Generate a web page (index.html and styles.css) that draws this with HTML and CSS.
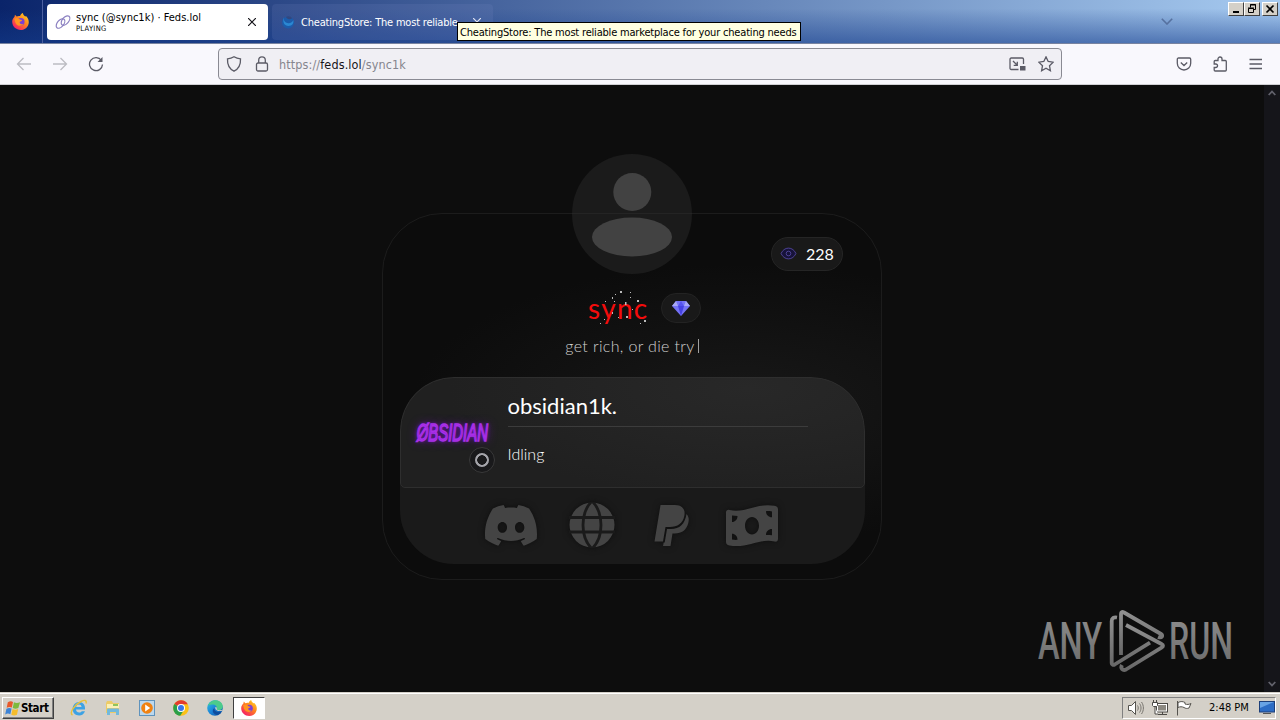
FILE: index.html
```html
<!DOCTYPE html>
<html lang="en">
<head>
    <meta charset="UTF-8">
    <meta name="viewport" content="width=device-width, initial-scale=1.0">
    <title>sync (@sync1k) · Feds.lol</title>
    <link rel="stylesheet" href="styles.css">
</head>
<body>
    <!-- shared icons -->
    <svg width="0" height="0" class="defs">
        <defs>
            <linearGradient id="foxBody" x1="1" y1="0" x2="0.2" y2="1">
                <stop offset="0" stop-color="#ffe226"/>
                <stop offset="0.45" stop-color="#ff8a1c"/>
                <stop offset="1" stop-color="#f5156c"/>
            </linearGradient>
            <linearGradient id="edgeBody" x1="0" y1="0" x2="1" y2="1">
                <stop offset="0" stop-color="#2fc3df"/>
                <stop offset="0.5" stop-color="#1b83d8"/>
                <stop offset="1" stop-color="#0c4fa0"/>
            </linearGradient>
            <linearGradient id="mark" x1="0" y1="0" x2="0" y2="1">
                <stop offset="0" stop-color="#8f8f8f"/>
                <stop offset="1" stop-color="#686868"/>
            </linearGradient>
            <symbol id="firefox" viewBox="0 0 16 16">
                <path d="M2.4 3.6l.4-2 1.6 1.7C5.400 2.700 6.500 2.600 7.600 2.900 8 1.600 8.900.6 10.200 0c.2 1.600 1 2.300 2.300 3.200l.7-.3C15 4.500 15.900 6.700 15.800 8.900 15.600 13 12.200 16 8.200 16 3.900 16 .3 12.700.2 8.500.1 6.600.9 5 2.400 3.600z" fill="url(#foxBody)"/>
                <circle cx="8.300" cy="8.300" r="3.500" fill="#7a3fd6"/>
                <path d="M2 5.500c2.200-1.500 4.300-1 5.400.7l2.100.5c-.3 1-1.300 1.300-2.200 1.600-.4 1.800 1.400 2.700 3.500 1.900-1.300 2.500-5.800 2.500-7.300-.6C2.600 8.500 3 7 2 5.500z" fill="#ff9420"/>
            </symbol>
        </defs>
    </svg>

    <div class="browser">
        <div class="titlebar">
            <div class="pinned">
                <svg width="17" height="17"><use href="#firefox"/></svg>
            </div>
            <div class="tab active">
                <svg class="favicon" width="16" height="16" viewBox="0 0 16 16" fill="none" stroke="#8a7fc0" stroke-width="1.200">
                    <ellipse cx="5.500" cy="9.500" rx="3.200" ry="5.500" transform="rotate(40 5.500 9.500)"/>
                    <ellipse cx="10.500" cy="6.500" rx="3.200" ry="5.500" transform="rotate(40 10.500 6.500)"/>
                </svg>
                <div class="tab-text">
                    <span class="tab-title">sync (@sync1k) · Feds.lol</span>
                    <span class="tab-status">PLAYING</span>
                </div>
                <svg class="tab-close" width="8" height="8" viewBox="0 0 8 8" stroke="#15141a" stroke-width="1.200"><path d="M0 0l8 8M8 0l-8 8"/></svg>
            </div>
            <div class="tab">
                <svg class="favicon" width="16" height="16" viewBox="0 0 16 16">
                    <circle cx="8" cy="8.500" r="6" fill="#1c5cab"/>
                    <path d="M4 3c-1 4 2 6.500 5 6.200 2.500-.2 4-1.700 4.200-3.200 1 3-1.200 6-4.700 6C4.500 12 2 8 4 3z" fill="#2b88d2"/>
                    <path d="M6 3c1 2 3 3 6 1.500C11 2 8 1.500 6 3z" fill="#33477e"/>
                </svg>
                <span class="tab-title long">CheatingStore: The most reliable</span>
                <svg class="tab-close" width="8" height="8" viewBox="0 0 8 8" stroke="#dfe4f2" stroke-width="1.200"><path d="M0 0l8 8M8 0l-8 8"/></svg>
            </div>
            <svg class="all-tabs" width="12" height="7" viewBox="0 0 12 7" fill="none" stroke="#56719f" stroke-width="1.600"><path d="M.8.8L6 6l5.200-5.200"/></svg>
            <div class="controls">
                <button><svg width="12" height="10" viewBox="0 0 12 10"><path d="M3 8h6" stroke="#000" stroke-width="2"/></svg></button>
                <button><svg width="12" height="10" viewBox="0 0 12 10" fill="none" stroke="#000"><path d="M4.500 3.500V.5h5v5H8M4 1h6M2.500 4.500h5v4h-5zM2 4h6"/></svg></button>
                <button class="close"><svg width="12" height="10" viewBox="0 0 12 10" stroke="#000" stroke-width="1.700"><path d="M2.500 1.500l7 7M9.500 1.500l-7 7"/></svg></button>
            </div>
        </div>

        <div class="toolbar">
            <svg class="nav back" width="16" height="16" viewBox="0 0 16 16"><path d="M15 8H1.500M7.500 2L1.500 8l6 6"/></svg>
            <svg class="nav forward" width="16" height="16" viewBox="0 0 16 16"><path d="M1 8h13.500M8.500 2l6 6-6 6"/></svg>
            <svg class="nav reload" width="16" height="16" viewBox="0 0 16 16"><path d="M13.400 4.500A6.500 6.500 0 1 0 14.500 8.500"/><path d="M14.500 1v5h-5z" fill="#5b5b66" stroke="none"/></svg>
            <div class="urlbar">
                <svg width="16" height="16" viewBox="0 0 16 16"><path d="M8 .8c2 1.300 4.300 1.900 6.500 2 .3 5.700-1.500 10-6.500 12.400C3 12.800 1.200 8.500 1.500 2.800 3.700 2.700 6 2.100 8 .8z"/></svg>
                <svg width="16" height="16" viewBox="0 0 16 16"><rect x="2.500" y="7" width="11" height="8" rx="1.500"/><path d="M4.700 7V4.200a3.300 3.300 0 0 1 6.600 0V7"/></svg>
                <span class="url">https://<b>feds.lol</b>/sync1k</span>
                <svg width="17" height="16" viewBox="0 0 17 16"><path d="M9.500 13.500H2.200C1.500 13.500 1 13 1 12.300V3.200C1 2.500 1.500 2 2.200 2h11.100c.7 0 1.200.5 1.200 1.200V8M4 5l4 4M8.300 5.700v3.600H4.700"/><rect x="11" y="10" width="5.500" height="4.500" fill="#5b5b66" stroke="none"/></svg>
                <svg width="16" height="16" viewBox="0 0 16 16"><path d="M8 .9l2.200 4.600 5 .7-3.700 3.500.9 5L8 12.300l-4.400 2.400.9-5L.8 6.200l5-.7z"/></svg>
            </div>
            <svg width="16" height="16" viewBox="0 0 16 16"><path d="M2.500 2h11c.7 0 1.200.5 1.200 1.200v4.100a6.700 6.700 0 0 1-13.400 0V3.200C1.300 2.500 1.800 2 2.500 2zM4.800 6.500L8 9.500l3.200-3"/></svg>
            <svg width="16" height="16" viewBox="0 0 16 16"><path d="M6 4.500V3a2 2 0 0 1 4 0v1.500h3.300c.6 0 1 .4 1 1V14c0 .6-.4 1-1 1H3.200c-.6 0-1-.4-1-1v-2.500h1.600a1.700 1.700 0 0 0 0-3.500H2.200V5.500c0-.6.400-1 1-1z"/></svg>
            <svg width="16" height="16" viewBox="0 0 16 16"><path d="M1.500 3.500h12.500M1.500 8h12.500M1.500 12.500h12.500"/></svg>
        </div>

        <div class="page">
            <main>
                <div class="card">
                    <svg class="avatar" width="120" height="120" viewBox="0 0 120 120">
                        <circle cx="60" cy="60" r="60" fill="#1b1b1b"/>
                        <path d="M0 59.500h120" stroke="#242424"/>
                        <circle cx="60.300" cy="38" r="19" fill="#424242"/>
                        <ellipse cx="60" cy="83" rx="40" ry="19.500" fill="#424242"/>
                    </svg>
                    <div class="views">
                        <svg width="17" height="13" viewBox="0 0 18 14" fill="#17133a" stroke="#51459b"><path d="M1 7c1.500-3.500 4.500-5.800 8-5.800s6.500 2.300 8 5.800c-1.500 3.500-4.500 5.800-8 5.800S2.500 10.500 1 7z"/><circle cx="9" cy="7" r="2.500"/></svg>
                        <span>228</span>
                    </div>
                    <div class="name-row">
                        <h1 class="name">sync</h1>
                        <svg class="sparkles" width="64" height="38" viewBox="0 0 64 38" fill="#bbb">
                            <path d="M37 2h2v2h-2zM32 5h1v1h-1zM29 8h1v2h-1zM47 3h1v1h-1zM42 13h1.500v3H42zM54 11h2v2h-2zM47 8h1v1h-1zM29 23h1v2h-1zM43 27h2v2h-2zM61 31h2v2h-2zM57 34h1v1h-1zM35 28h1v1h-1zM21 30h1v1h-1zM17 34h1v1h-1zM31 12h1v1h-1zM49 20h1v1h-1zM22 12h1v1h-1z"/>
                        </svg>
                        <div class="badge">
                            <svg width="18" height="15" viewBox="0 0 18 15">
                                <path d="M4 0h10l4 5-9 10L0 5z" fill="#7472f5"/>
                                <path d="M4 0l2 5H0zM14 0l-2 5h6z" fill="#a7a8f4"/>
                                <path d="M9 0l3 5H6z" fill="#5552ee"/>
                                <path d="M6 5h6l-3 10z" fill="#4541e2"/>
                            </svg>
                        </div>
                    </div>
                    <p class="bio">get rich, or die try<i class="cursor"></i></p>

                    <div class="panel">
                        <div class="presence">
                            <div class="discord-avatar">
                                <span class="neon">ØBSIDIAN</span>
                                <span class="status"></span>
                            </div>
                            <div class="activity">
                                <h2>obsidian1k.</h2>
                                <p>Idling</p>
                            </div>
                        </div>
                        <div class="socials">
                            <svg width="52" height="41" viewBox="0 2.800 24 18.500" preserveAspectRatio="none"><path d="M20.317 4.370a19.790 19.790 0 0 0-4.885-1.515.074.074 0 0 0-.079.037c-.211.375-.445.865-.608 1.250-1.845-.276-3.680-.276-5.487 0-.164-.393-.406-.874-.618-1.250a.077.077 0 0 0-.079-.037 19.736 19.736 0 0 0-4.885 1.515.070.070 0 0 0-.032.028C.533 9.046-.319 13.580.099 18.058a.082.082 0 0 0 .031.056c2.053 1.508 4.041 2.423 5.993 3.029a.078.078 0 0 0 .084-.028c.462-.630.873-1.295 1.226-1.994a.076.076 0 0 0-.042-.106c-.653-.248-1.274-.550-1.872-.892a.077.077 0 0 1-.008-.128c.126-.094.252-.192.372-.291a.074.074 0 0 1 .078-.011c3.928 1.793 8.180 1.793 12.061 0a.074.074 0 0 1 .079.010c.120.099.246.198.373.292a.077.077 0 0 1-.007.128 12.299 12.299 0 0 1-1.873.891.077.077 0 0 0-.041.107c.360.698.772 1.363 1.225 1.993a.076.076 0 0 0 .084.029c1.961-.607 3.950-1.522 6.002-3.029a.077.077 0 0 0 .031-.055c.500-5.177-.838-9.674-3.549-13.660a.061.061 0 0 0-.031-.029zM8.020 15.331c-1.183 0-2.157-1.086-2.157-2.419s.956-2.419 2.157-2.419c1.211 0 2.176 1.095 2.157 2.419 0 1.333-.956 2.419-2.157 2.419zm7.975 0c-1.183 0-2.157-1.086-2.157-2.419s.955-2.419 2.157-2.419c1.211 0 2.176 1.095 2.157 2.419 0 1.333-.946 2.419-2.157 2.419z"/></svg>
                            <svg class="globe" width="46" height="46" viewBox="0 0 46 46"><circle cx="23" cy="23" r="22.500"/><path d="M0 15.500h46M0 30h46M23-1C11 11 11 35 23 47M23-1c12 12 12 36 0 48" fill="none" stroke="#1a1a1a" stroke-width="2.800"/></svg>
                            <svg class="paypal" width="36" height="41" viewBox="0 0 36 41"><path d="M6.500 0H21c7 0 11 4.500 9.300 11-1.600 7.500-6.800 11-14.300 11H11.500L9 36.500H.5z"/><path d="M32.500 9c2.500 2.500 2.700 5.500 1.800 9-1.800 7-6.500 10.500-13.500 10.500h-2.300L16.500 41H9l.7-3.500h1L13 24h4c8.500 0 14-5 15.500-15z"/></svg>
                            <svg width="52" height="41" viewBox="0 0 52 41" fill-rule="evenodd"><path d="M0 7.500C0 5.500 1.500 4.500 3.500 5 19 8.500 31-2.500 48.500.800 51 1.300 52 2.500 52 4.500V34c0 2-1.500 3-3.500 2.500C33 33 21 44 3.500 40.500 1 40 0 39 0 37zM26 12c-3.800 0-7 3.800-7 8.700s3.200 8.700 7 8.700 7-3.800 7-8.700S29.800 12 26 12zM6 10.500V17c3 0 5.500-2.500 5.500-6zM6 34.500c2 .4 4 .5 5.500.3 0-3.500-2.500-6-5.500-6zM46 6.500c-2-.4-4-.5-6-.3 0 3.500 2.500 6 6 6zM46 24c-3.500 0-6 2.500-6 6 2-.1 4 0 6 .3z"/></svg>
                        </div>
                    </div>
                </div>

                <svg class="watermark" width="204" height="70" viewBox="0 0 204 70">
                    <text x="0" y="50" textLength="64" lengthAdjust="spacingAndGlyphs">ANY</text>
                    <text x="131" y="50" textLength="64" lengthAdjust="spacingAndGlyphs">RUN</text>
                    <g fill="none" stroke="url(#mark)" stroke-width="3.800" stroke-linejoin="round">
                        <path d="M79 8.500c-3-.5-5.300.5-5.300 3.500v42.300c0 1.500 1.500 2 3 1.200L112 33.700"/>
                        <path d="M83 46V5c0-2 1-2.500 3-1.500l37 21.500c2.500 1.500 1 4.500-3 3"/>
                        <path d="M88 16l35.500 19c2 1 2 2.500 0 3.700L88 60.500c-3 1.500-6-1-4-4.500"/>
                    </g>
                </svg>
            </main>
            <div class="scrollbar">
                <svg width="8" height="6" viewBox="0 0 8 6"><path d="M.7 5L4 1.500 7.300 5"/></svg>
                <svg width="8" height="6" viewBox="0 0 8 6"><path d="M.7 1L4 4.500 7.300 1"/></svg>
            </div>
        </div>

        <div class="tooltip">CheatingStore: The most reliable marketplace for your cheating needs</div>
    </div>

    <div class="taskbar">
        <button class="start">
            <svg width="16" height="16" viewBox="0 0 17 16">
                <path d="M3 2c2-1.500 4-1.500 5.500-.5L7.300 7.500C5.500 6.500 3.800 6.600 1.800 7.700z" fill="#e8592b"/>
                <path d="M9.500 2c2 1 4 1 6.500 0l-1.800 6c-2 1-4 1-6 0z" fill="#7dba3c"/>
                <path d="M1.500 8.800c2-1.100 3.700-1.200 5.500-.2l-1.300 6c-1.700-1-3.500-1-5.500.2z" fill="#3e84d6"/>
                <path d="M8 9.100c2 1 4 1 6 0l-1.300 6c-2 1-4 1-6 0z" fill="#f6bd2c"/>
            </svg>
            Start
        </button>
        <div class="quick">
            <svg width="18" height="18" viewBox="0 0 18 18">
                <path d="M15 10.500H6c.3 2.200 1.500 3 3.200 3 1.200 0 2-.5 2.600-1.300H15c-1 2.700-3.200 4.300-5.900 4.300-3.700 0-6.500-2.800-6.500-6.500s2.800-7 6.500-7c3.800 0 6.500 3 5.900 7.500zM6.100 7.900h5.500C11.400 6.200 10.400 5.400 9 5.400S6.500 6.200 6.100 7.900z" fill="#3da2e4" fill-rule="evenodd"/>
                <path d="M2.500 16C-1.500 14 5 5.500 11 2.500c3.500-1.800 6-1.500 5 2" fill="none" stroke="#e8c13b" stroke-width="1.400"/>
            </svg>
            <svg width="18" height="18" viewBox="0 0 18 18">
                <path d="M2 4l1-2h5l1 2h6v10H2z" fill="#eccb68"/>
                <path d="M3 5h12v4H3z" fill="#fbf0b5"/>
                <path d="M9 5h5v2H9z" fill="#8fc45f"/>
                <path d="M3 16V11c0-1 .5-1.500 1.500-1.500h9c1 0 1.500.5 1.500 1.500v5h-3v-3H6v3z" fill="#72b9dc"/>
            </svg>
            <svg width="18" height="18" viewBox="0 0 18 18">
                <rect x="1.500" y="1.500" width="15" height="15" fill="#bcd8ee" stroke="#5f93bd"/>
                <circle cx="9" cy="9" r="5.800" fill="#f08212"/>
                <path d="M7.200 5.500v7l5-3.500z" fill="#fff"/>
            </svg>
            <svg width="18" height="18" viewBox="0 0 18 18">
                <circle cx="9" cy="9" r="7.800" fill="#fbc116"/>
                <path d="M9 9L2.300 5A7.800 7.800 0 0 1 15.800 5.200H9z" fill="#e33b2e"/>
                <path d="M9 9L2.300 5A7.800 7.800 0 0 0 8.200 16.800L12 11z" fill="#2a9f49"/>
                <circle cx="9" cy="9" r="4" fill="#fff"/>
                <circle cx="9" cy="9" r="3" fill="#3a76e8"/>
            </svg>
            <svg width="18" height="18" viewBox="0 0 18 18">
                <circle cx="9" cy="9" r="7.800" fill="url(#edgeBody)"/>
                <path d="M2 6.500C3.500 2.500 7 1 10 1.200c4 .3 7 3.300 6.800 6.500-.2 2.300-2 3.600-4.500 3.500-1.300 0-2.200-.5-1.500-1.400C11.500 7 8 4 2 6.500z" fill="#4ccb8b"/>
                <path d="M8.500 9c-.5 2.500 2 5 7 3.700-1 1.800-3 3-4.500 3.300C6.500 15 5.500 11 8.500 9z" fill="#0f4c9d"/>
                <path d="M9 8.500c1.200-.8 2.200 0 1.800 1.200-.6 1.200 1.500 2 6.500 1-1 1.800-7.500 2.500-8.300-2.200z" fill="#d4d0c8"/>
            </svg>
            <div class="running"><svg width="16" height="16"><use href="#firefox"/></svg></div>
        </div>
        <div class="tray">
            <svg width="16" height="16" viewBox="0 0 16 16" fill="#fff" stroke="#55534e"><path d="M.5 5.500h3l4-4v13l-4-4h-3z"/><path d="M9.500 5.500c1 1.500 1 3.500 0 5M11.500 3.500c2 2.500 2 6.500 0 9M13.500 2c2.500 3.500 2.500 8.500 0 12" fill="none" stroke="#77746e"/></svg>
            <svg width="16" height="16" viewBox="0 0 16 16" fill="#fff" stroke="#4c4a46"><rect x="4.500" y="3.500" width="11" height="8.500"/><rect x="6" y="5" width="8" height="5.500" fill="#8b8880" stroke="none"/><path d="M6 14.500h9M10.500 12v2M.5 2.500h5v3l-1 1h-3l-1-1zM1.500 2.500V0M4.500 2.500V0M3 7v7h3"/></svg>
            <svg width="16" height="16" viewBox="0 0 16 16" fill="#fff" stroke="#55534e"><path d="M1.500 1v14.500"/><path d="M2 2.500c3-1.500 5-1 7 0v1.500c2 .8 4 .5 6-.5l-2 4.500c-2 .8-3.500.5-5-.5-2-1-4-1-6 0z"/></svg>
            <span class="clock">2:48 PM</span>
            <svg width="16" height="15" viewBox="0 0 16 15"><rect x=".5" y="1.500" width="15" height="10.500" fill="#2c6cc4" stroke="#1c3f7a"/><path d="M1 2h14L1 8z" fill="#68a3e4"/><path d="M4 13.500h8" stroke="#555"/></svg>
        </div>
    </div>
</body>
</html>
```
FILE: styles.css
```css
body, html {
    margin: 0;
    padding: 0;
    width: 100%;
    height: 100%;
    overflow: hidden;
    font-family: "DejaVu Sans Condensed", "DejaVu Sans", sans-serif;
    font-size: 11px;
}
body {
    display: flex;
    flex-direction: column;
    background: #0d0d0d;
}
svg {
    display: block;
    flex: none;
}
.defs {
    position: absolute;
}
.browser {
    flex: 1;
    min-height: 0;
    display: flex;
    flex-direction: column;
    position: relative;
}

/* tab strip */
.titlebar {
    height: 44px;
    box-sizing: border-box;
    border-bottom: 1px solid #7883a0;
    display: flex;
    align-items: flex-start;
    background: linear-gradient(180deg, rgba(20, 50, 140, 0) 20%, rgba(20, 60, 140, 0.55)), linear-gradient(90deg, #0a246a, #a6caf0);
}
.pinned {
    width: 43px;
    height: 43px;
    display: flex;
    align-items: center;
    justify-content: center;
    border-right: 1px solid #4c60a0;
    padding-right: 1px;
    box-sizing: border-box;
    margin-right: 4px;
}
.tab {
    width: 221px;
    height: 36px;
    box-sizing: border-box;
    margin: 4px 4px 0 0;
    padding: 0 12px 0 8px;
    border-radius: 4px;
    display: flex;
    align-items: center;
    background: rgba(130, 140, 200, 0.15);
    color: #fff;
}
.tab.active {
    background: #fff;
    color: #000;
}
.favicon {
    margin-right: 5px;
}
.tab-text {
    display: flex;
    flex-direction: column;
}
.tab-title {
    font-size: 11px;
    line-height: 13px;
    white-space: nowrap;
}
.tab-title.long {
    letter-spacing: -0.200px;
    padding-top: 1px;
}
.tab-status {
    font-size: 7.500px;
    line-height: 9px;
    letter-spacing: 0.300px;
}
.tab-close {
    margin-left: auto;
}
.all-tabs {
    margin: 18px 0 0 auto;
}
.controls {
    display: flex;
    margin: 2px 2px 0 55px;
}
.controls button {
    width: 16px;
    height: 14px;
    padding: 0;
    background: #d4d0c8;
    border: 1px solid;
    border-color: #fff #404040 #404040 #fff;
    display: flex;
    align-items: center;
    justify-content: center;
}
.controls .close {
    margin-left: 2px;
}

/* navigation bar */
.toolbar {
    height: 41px;
    box-sizing: border-box;
    border-bottom: 1px solid #d0d0d4;
    padding: 0 16px;
    display: flex;
    align-items: center;
    gap: 20px;
    background: #f9f8fd;
}
.toolbar svg {
    fill: none;
    stroke: #5b5b66;
    stroke-width: 1.300;
}
.toolbar .back, .toolbar .forward {
    stroke: #bcbcc2;
}
.urlbar {
    width: 844px;
    height: 32px;
    box-sizing: border-box;
    margin: 0 94px 0 94px;
    padding: 0 7px;
    border: 1px solid #8a8a93;
    border-radius: 4px;
    background: #f0eff4;
    display: flex;
    align-items: center;
    gap: 12px;
}
.url {
    flex: 1;
    margin-left: -3px;
    font-size: 12.500px;
    letter-spacing: 0.120px;
    color: #85858d;
}
.url b {
    font-weight: normal;
    color: #15141a;
}
.tooltip {
    position: absolute;
    left: 457px;
    top: 22px;
    width: 344px;
    height: 19px;
    box-sizing: border-box;
    border: 1px solid #000;
    background: #ffffe1;
    padding-left: 2px;
    line-height: 19px;
    letter-spacing: -0.190px;
    white-space: nowrap;
}

/* profile page */
.page {
    flex: 1;
    min-height: 0;
    display: flex;
    background: #0d0d0d;
}
main {
    flex: 1;
    position: relative;
    display: flex;
    justify-content: center;
    align-items: flex-start;
    font-family: Lato, sans-serif;
}
.card {
    position: relative;
    width: 500px;
    height: 367px;
    box-sizing: border-box;
    margin-top: 128px;
    border: 1px solid #1c1c1c;
    border-radius: 60px;
    display: flex;
    flex-direction: column;
    align-items: center;
    background: radial-gradient(ellipse 330px 140px at 72% 52%, #181818, #0c0c0c);
}
.avatar {
    margin-top: -60px;
}
.views {
    position: absolute;
    top: 23px;
    right: 38px;
    width: 72px;
    height: 34px;
    box-sizing: border-box;
    padding: 0 0 2px 8px;
    border: 1px solid #252525;
    border-radius: 17px;
    background: #191919;
    display: flex;
    align-items: center;
    gap: 9px;
    color: #fff;
    font-size: 16px;
}
.name-row {
    position: relative;
    display: flex;
    align-items: center;
    height: 30px;
    margin-top: 19px;
    padding-left: 25px;
}
.name {
    width: 73px;
    margin: 0;
    font-size: 28px;
    font-weight: 400;
    line-height: 30px;
    letter-spacing: 1.300px;
    color: #f40c0c;
}
.sparkles {
    position: absolute;
    left: 20px;
    top: -4px;
}
.badge {
    width: 40px;
    height: 30px;
    box-sizing: border-box;
    border: 1px solid #232323;
    border-radius: 15px;
    background: #191919;
    display: flex;
    align-items: center;
    justify-content: center;
}
.bio {
    margin: 12px 0 0;
    height: 20px;
    display: flex;
    align-items: center;
    font-size: 16px;
    font-weight: 300;
    letter-spacing: 0.350px;
    color: #d0d0d0;
}
.cursor {
    width: 1px;
    height: 14px;
    margin: 2px 0 0 3px;
    background: #a0a0a0;
}
.panel {
    width: 465px;
    height: 187px;
    margin-top: 22px;
    border-radius: 54px;
    background: #1a1a1a;
    overflow: hidden;
}
.presence {
    height: 111px;
    box-sizing: border-box;
    border: 1px solid #2e2e2e;
    border-radius: 54px 54px 5px 5px;
    display: flex;
    padding-left: 15px;
    background: radial-gradient(ellipse 300px 110px at 75% 10%, #282828, #202020);
}
.discord-avatar {
    position: relative;
    width: 76px;
    height: 80px;
    margin: 15px 16px 0 0;
    display: flex;
    align-items: center;
    justify-content: center;
}
.neon {
    font-family: "Liberation Sans", sans-serif;
    font-size: 24px;
    font-style: italic;
    font-weight: 400;
    color: #8a1fc9;
    transform: translateX(-1px) scaleX(0.620);
    -webkit-text-stroke: 1.500px #a930e8;
    text-shadow: 0 0 5px #8a1be0, 0 0 12px #6c14b0;
}
.status {
    position: absolute;
    right: -3px;
    bottom: 0;
    width: 14px;
    height: 14px;
    box-sizing: content-box;
    border: 6px solid #19191b;
    border-radius: 50%;
    background: radial-gradient(circle, #19191b 4.500px, #a4a4aa 5px, #a4a4aa 7px, #19191b 7.500px);
    outline: 1px solid #3a3a3a;
    outline-offset: -1px;
}
.activity {
    width: 300px;
    color: #fff;
}
.activity h2 {
    margin: 0;
    height: 48px;
    border-bottom: 1px solid #3c3c3c;
    font-size: 22px;
    font-weight: 400;
    line-height: 55px;
}
.activity p {
    margin: 17px 0 0;
    font-size: 16px;
    line-height: 20px;
    font-weight: 300;
}
.socials {
    height: 74px;
    padding-right: 1px;
    display: flex;
    align-items: center;
    justify-content: center;
    fill: #444;
    filter: drop-shadow(0 0 3px #0e0e0e);
}
.globe {
    margin: 0 39px 0 32px;
}
.paypal {
    margin-right: 36px;
}

.watermark {
    position: absolute;
    left: 1038px;
    top: 524px;
}
.watermark text {
    font-family: Roboto, sans-serif;
    font-size: 52px;
    font-weight: 500;
    fill: url(#mark);
}
.scrollbar {
    width: 16px;
    box-sizing: border-box;
    padding: 5px 4px;
    background: #15151a;
    display: flex;
    flex-direction: column;
    justify-content: space-between;
}
.scrollbar svg {
    fill: none;
    stroke: #62626c;
    stroke-width: 1.800;
}

/* windows taskbar */
.taskbar {
    height: 28px;
    box-sizing: border-box;
    border-top: 1px solid #d4d0c8;
    box-shadow: inset 0 1px 0 #fff;
    background: #d4d0c8;
    display: flex;
    align-items: center;
    padding: 2px 4px 0 2px;
}
.start {
    width: 52px;
    height: 22px;
    padding: 0 0 0 2px;
    border: 1px solid;
    border-color: #fff #404040 #404040 #fff;
    box-shadow: inset -1px -1px 0 #808080;
    background: #d4d0c8;
    display: flex;
    align-items: center;
    font-family: "DejaVu Sans Condensed", sans-serif;
    font-size: 11.500px;
    font-weight: bold;
    letter-spacing: -0.400px;
}
.quick {
    display: flex;
    align-items: center;
    gap: 16px;
    margin-left: 16px;
}
.running {
    width: 32px;
    height: 22px;
    box-sizing: border-box;
    margin-left: -7px;
    border: 1px solid;
    border-color: #404040 #fff #fff #404040;
    background: #fff;
    display: flex;
    align-items: center;
    justify-content: center;
}
.tray {
    margin-left: auto;
    width: 154px;
    height: 22px;
    box-sizing: border-box;
    border: 1px solid;
    border-color: #808080 #fff #fff #808080;
    display: flex;
    align-items: center;
    gap: 8px;
    padding-left: 5px;
}
.clock {
    width: 42px;
    margin-left: 9px;
    white-space: nowrap;
}
```
